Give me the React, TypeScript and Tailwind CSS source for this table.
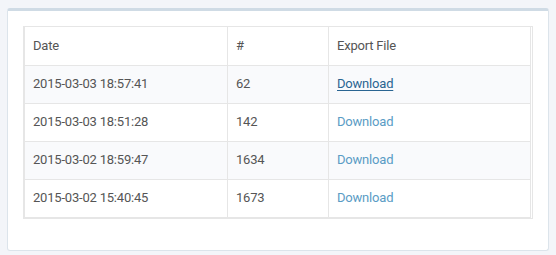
const rows = [
  { date: '2015-03-03 18:57:41', count: 62, hover: true },
  { date: '2015-03-03 18:51:28', count: 142 },
  { date: '2015-03-02 18:59:47', count: 1634 },
  { date: '2015-03-02 15:40:45', count: 1673 },
];

const cell = 'h-[38px] border border-[#e6e6e6] px-2 py-0 text-left align-middle font-normal';

export default function App() {
  return (
    <div
      className="min-h-screen bg-[#f3f5f9] px-[7px] pt-2 text-[13px] tracking-[-0.2px] text-[#555]"
      style={{ fontFamily: 'Roboto, "Open Sans", sans-serif' }}
    >
      <div className="rounded-[3px] border border-[#dce4eb] border-t-[3px] border-t-[#cfdbe5] bg-white px-[15px] pb-[31px] pt-[15px]">
        <div className="border border-[#e6e6e6]">
          <table className="w-[calc(100%-1px)] border-collapse">
            <thead>
              <tr className="bg-white">
                <th className={`${cell} w-[203px] border-t-0`}>Date</th>
                <th className={`${cell} w-[101px] border-t-0`}>#</th>
                <th className={`${cell} border-t-0`}>Export File</th>
              </tr>
            </thead>
            <tbody>
              {rows.map((r, i) => (
                <tr key={r.date} className={i % 2 === 0 ? 'bg-[#f9fafc]' : 'bg-white'}>
                  <td className={cell}>{r.date}</td>
                  <td className={cell}>{r.count}</td>
                  <td className={cell}>
                    <a
                      href="#"
                      className={r.hover ? 'text-[#2a6592] underline underline-offset-2' : 'text-[#5a9cc5]'}
                    >
                      Download
                    </a>
                  </td>
                </tr>
              ))}
            </tbody>
          </table>
        </div>
      </div>
    </div>
  );
}
